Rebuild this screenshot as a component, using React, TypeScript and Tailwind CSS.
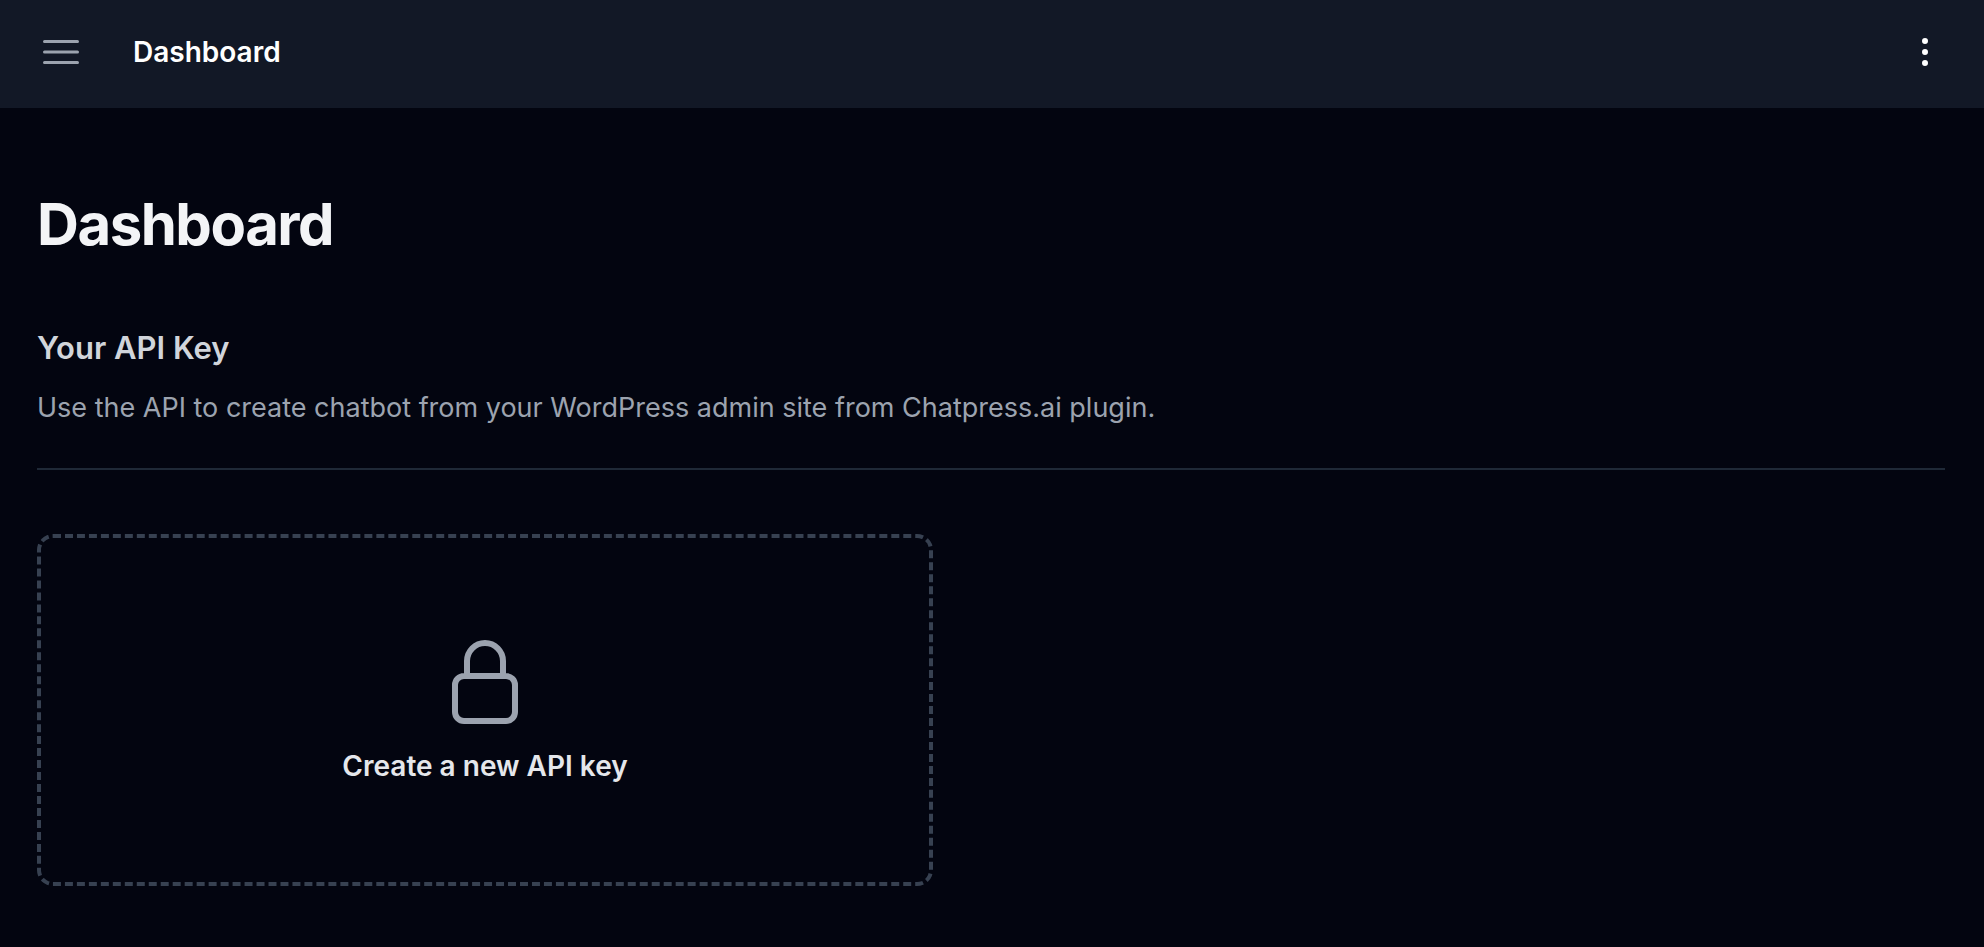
function MenuIcon() {
  return (
    <svg className="size-12" fill="none" viewBox="0 0 24 24" strokeWidth={1.5} stroke="currentColor" aria-hidden="true">
      <path strokeLinecap="round" strokeLinejoin="round" d="M3.75 6.75h16.5M3.75 12h16.5m-16.5 5.25h16.5" />
    </svg>
  );
}

function DotsIcon() {
  return (
    <svg className="size-10" viewBox="0 0 20 20" fill="currentColor" aria-hidden="true">
      <path d="M10 3a1.5 1.5 0 110 3 1.5 1.5 0 010-3zM10 8.5a1.5 1.5 0 110 3 1.5 1.5 0 010-3zM11.5 15.5a1.5 1.5 0 10-3 0 1.5 1.5 0 003 0z" />
    </svg>
  );
}

function LockIcon() {
  return (
    <svg className="mx-auto size-24 text-[#9ca3af]" fill="none" viewBox="0 0 24 24" strokeWidth={1.5} stroke="currentColor" aria-hidden="true">
      <path
        strokeLinecap="round"
        strokeLinejoin="round"
        d="M16.5 10.5V6.75a4.5 4.5 0 10-9 0v3.75m-.75 11.25h10.5a2.25 2.25 0 002.25-2.25v-6.75a2.25 2.25 0 00-2.25-2.25H6.75a2.25 2.25 0 00-2.25 2.25v6.75a2.25 2.25 0 002.25 2.25z"
      />
    </svg>
  );
}

function Header() {
  return (
    <header className="flex items-center gap-12 bg-[#121826] pt-7 pb-8 pl-[37px] pr-[39px]">
      <button type="button" aria-label="Open sidebar" className="text-[#9ca3af]">
        <MenuIcon />
      </button>
      <div className="flex-1 text-[28px] leading-[48px] font-semibold text-white">Dashboard</div>
      <button type="button" aria-label="Open options" className="text-white">
        <DotsIcon />
      </button>
    </header>
  );
}

export default function App() {
  return (
    <div className="min-h-screen bg-[#030510] font-['Inter',sans-serif]">
      <Header />
      <main className="pt-20 pb-8 pl-[37px] pr-[39px]">
        <h1 className="text-[58px] leading-[72px] font-bold tracking-tight text-[#f3f4f6]">Dashboard</h1>

        <section className="mt-16">
          <div className="border-b-2 border-[#1f2937] pb-10">
            <h2 className="text-[31px] leading-[48px] font-semibold text-[#d1d5db]">Your API Key</h2>
            <p className="mt-4 text-[27px] leading-[40px] text-[#9ca3af]">
              Use the API to create chatbot from your WordPress admin site from Chatpress.ai plugin.
            </p>
          </div>

          <button
            type="button"
            className="mt-16 block w-full max-w-4xl rounded-2xl border-4 border-dashed border-[#374151] p-24 text-center"
          >
            <LockIcon />
            <span className="mt-4 block text-[28px] leading-[40px] font-semibold text-[#e5e7eb]">
              Create a new API key
            </span>
          </button>
        </section>
      </main>
    </div>
  );
}
